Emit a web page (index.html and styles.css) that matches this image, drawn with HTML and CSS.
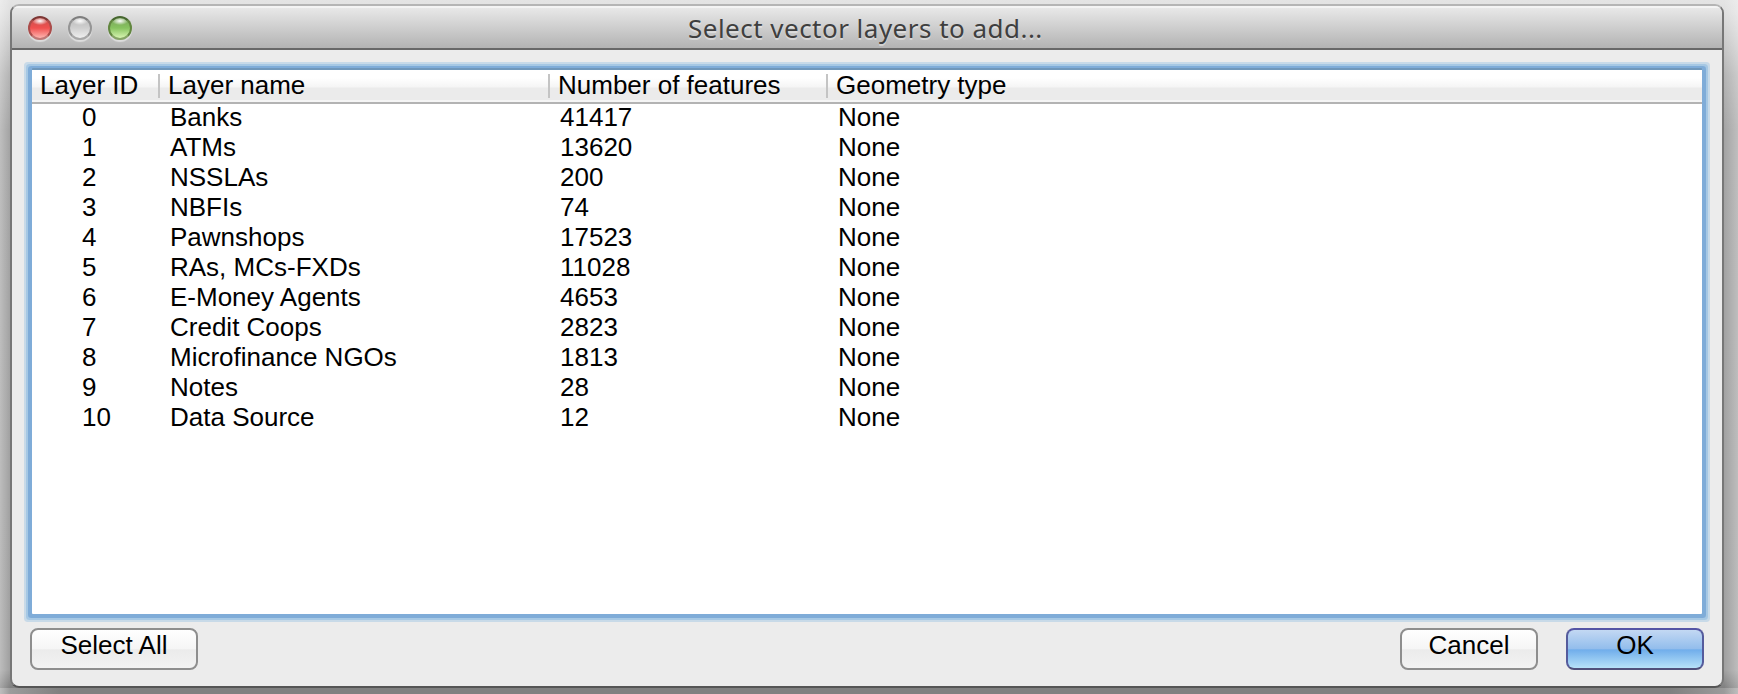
FILE: index.html
```html
<!DOCTYPE html>
<html lang="en">
<head>
<meta charset="utf-8">
<title>Select vector layers to add...</title>
<link rel="stylesheet" href="styles.css">
</head>
<body>
<main class="dialog">
  <header class="titlebar">
    <div class="lights"><span class="light red"></span><span class="light gray"></span><span class="light green"></span></div>
    <h1 class="title">Select vector layers to add...</h1>
  </header>
  <section class="content">
    <div class="list">
      <div class="row head"><span>Layer ID</span><span>Layer name</span><span>Number of features</span><span>Geometry type</span></div>
      <div class="row"><span>0</span><span>Banks</span><span>41417</span><span>None</span></div>
      <div class="row"><span>1</span><span>ATMs</span><span>13620</span><span>None</span></div>
      <div class="row"><span>2</span><span>NSSLAs</span><span>200</span><span>None</span></div>
      <div class="row"><span>3</span><span>NBFIs</span><span>74</span><span>None</span></div>
      <div class="row"><span>4</span><span>Pawnshops</span><span>17523</span><span>None</span></div>
      <div class="row"><span>5</span><span>RAs, MCs-FXDs</span><span>11028</span><span>None</span></div>
      <div class="row"><span>6</span><span>E-Money Agents</span><span>4653</span><span>None</span></div>
      <div class="row"><span>7</span><span>Credit Coops</span><span>2823</span><span>None</span></div>
      <div class="row"><span>8</span><span>Microfinance NGOs</span><span>1813</span><span>None</span></div>
      <div class="row"><span>9</span><span>Notes</span><span>28</span><span>None</span></div>
      <div class="row"><span>10</span><span>Data Source</span><span>12</span><span>None</span></div>
    </div>
    <footer class="actions">
      <button class="btn select">Select All</button>
      <button class="btn cancel">Cancel</button>
      <button class="btn ok">OK</button>
    </footer>
  </section>
</main>
</body>
</html>
```
FILE: styles.css
```css
* { box-sizing: border-box; }
body {
  margin: 0;
  height: 694px;
  padding: 4px 14px 6px 10px;
  overflow: hidden;
  background:
    linear-gradient(90deg, rgba(255,255,255,.3), transparent 10px, transparent 1724px, rgba(255,255,255,.3)),
    linear-gradient(90deg, rgba(170,170,170,.8), transparent 60px, transparent 1670px, rgba(170,170,170,.8)) 0 688px / 100% 6px no-repeat,
    linear-gradient(#e4e4e4 0, #e0e0e0 12px, #b4b4b4 75px, #a3a3a3 130px, #a0a0a0 670px, #808080 688px);
  font-family: "Liberation Sans", Arial, sans-serif;
  font-size: 26px;
  color: #000;
}
.dialog {
  height: 684px;
  border: 2px solid #777;
  border-top-color: #b5b5b5;
  border-bottom-color: #555;
  border-radius: 9px;
  background: #ececec;
  overflow: hidden;
}
.titlebar {
  position: relative;
  display: flex;
  align-items: center;
  height: 44px;
  border-top: 2px solid #f4f4f4;
  border-bottom: 2px solid #686868;
  background: linear-gradient(#e8e8e8, #b3b3b3);
}
.lights { display: flex; gap: 16px; padding-left: 16px; }
.light {
  width: 24px;
  height: 24px;
  border-radius: 50%;
  border: 2px solid;
  box-shadow: 0 2px 1px rgba(255,255,255,.5);
}
.red { border-color: #7c3634 #ab4c4a #c07876; background: radial-gradient(ellipse 8px 4px at 50% 3px, #fff, transparent), linear-gradient(#c8504d, #f0504f 50%, #ffb5b0); }
.gray { border-color: #7e7e7e #959595 #a8a8a8; background: radial-gradient(ellipse 8px 4px at 50% 3px, #fff, transparent), linear-gradient(#bbb, #cfcfcf 50%, #efefef); }
.green { border-color: #46662f #62873f #86a566; background: radial-gradient(ellipse 8px 4px at 50% 3px, #fff, transparent), linear-gradient(#7aa45c, #87c35f 50%, #d8f5b2); }
.title {
  position: absolute;
  inset: 0;
  margin: 0;
  padding-left: 676px;
  font: 400 26px/41px "Noto Sans", sans-serif;
  letter-spacing: .48px;
  color: #3f3f3f;
  text-shadow: 0 2px 0 rgba(255,255,255,.4);
  white-space: nowrap;
}
.content { padding: 20px 20px 0; }
.list {
  height: 544px;
  width: 1670px;
  background: #fff;
  border-radius: 1px;
  box-shadow: 0 -2px 0 0 #7098bb, 0 0 0 4px #7facd8, 0 0 0 6px #a6c8e4, 0 0 0 8px #c8dae8;
}
.row {
  display: grid;
  grid-template-columns: 128px 390px 278px 1fr;
  height: 30px;
  line-height: 26px;
  white-space: nowrap;
}
.row span { padding-left: 10px; }
.row span:first-child { padding-left: 50px; }
.head {
  height: 34px;
  border-bottom: 2px solid #b3b3b3;
  background: linear-gradient(#fff 0, #fff 8px, #f5f5f5 17px, #ebebeb 18px, #ebebeb 30px, #f5f5f5 30px);
  line-height: 31px;
}
.head span { padding-left: 8px; background: linear-gradient(#c4c4c4, #c4c4c4) right 0 top 4px / 2px 24px no-repeat; }
.head span:first-child { padding-left: 8px; }
.head span:last-child { background: none; }
.actions { display: flex; padding-top: 14px; margin: 0 -2px; width: 1674px; }
.btn {
  height: 42px;
  padding: 0 0 9px;
  border: 2px solid #8e8e8e;
  border-radius: 8px;
  background: linear-gradient(#fff, #f5f5f5 50%, #ebebeb 52%, #f3f3f3);
  font: 26px/30px "Liberation Sans", Arial, sans-serif;
  color: #000;
}
.select { width: 168px; margin-right: auto; }
.cancel { width: 138px; margin-right: 28px; }
.ok {
  width: 138px;
  border-color: #5555a5 #555b9c #50507a;
  background: linear-gradient(#c3d8f3, #92bdec 50%, #70adeb 52%, #b7e2f8);
}
```
